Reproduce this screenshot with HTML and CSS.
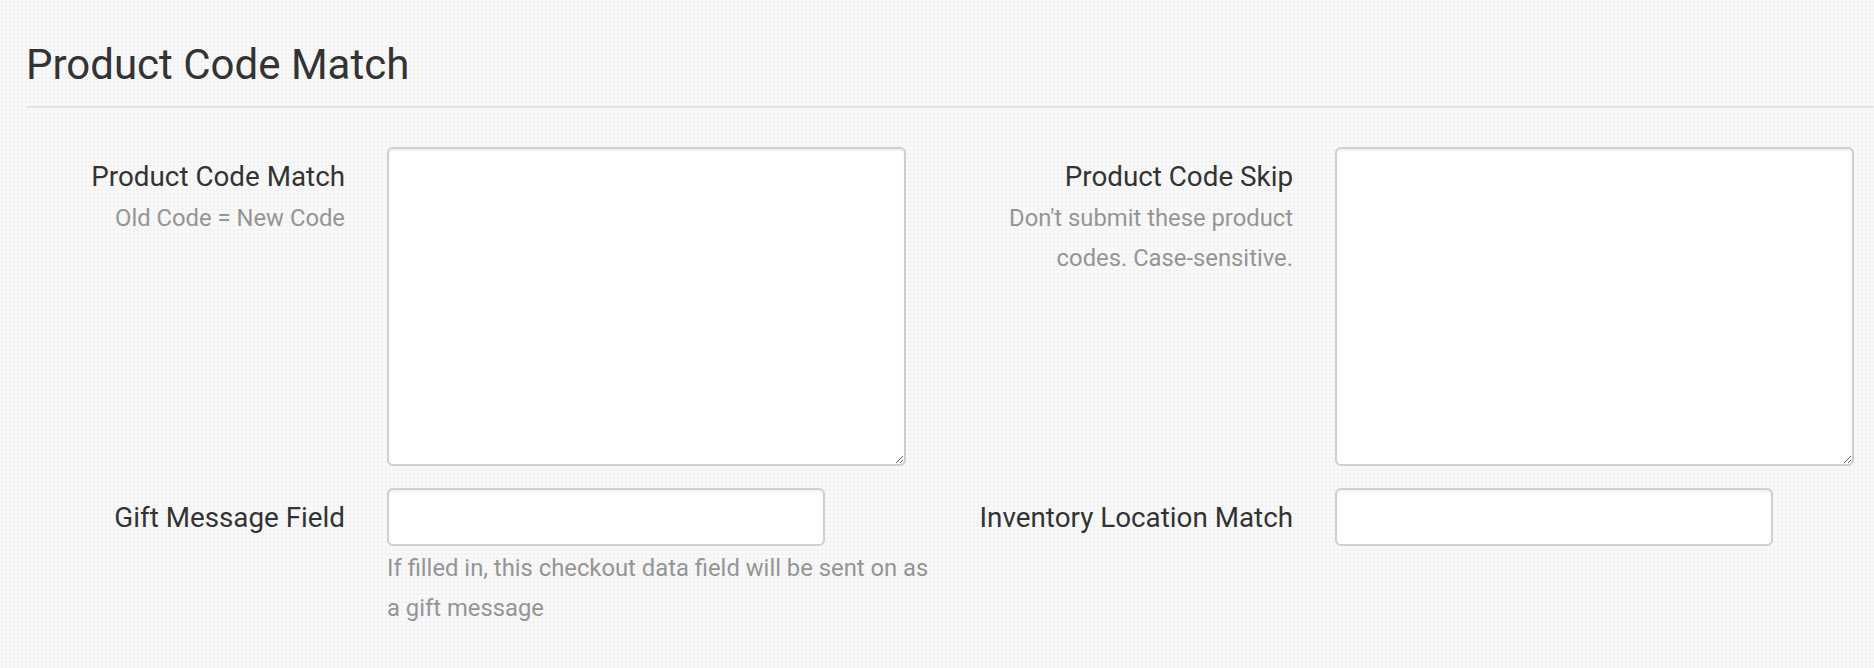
FILE: index.html
```html
<!DOCTYPE html>
<html lang="en">
<head>
<meta charset="utf-8">
<title>Product Code Match</title>
<link rel="stylesheet" href="styles.css">
</head>
<body>
<div class="page">
  <h1 class="section-title">Product Code Match</h1>
  <form class="form-grid">
    <div class="label-cell">
      <label class="control-label" for="pcm">Product Code Match</label>
      <p class="help help-right">Old Code = New Code</p>
    </div>
    <div class="control-cell">
      <textarea id="pcm" class="form-control textarea"></textarea>
    </div>
    <div class="label-cell">
      <label class="control-label" for="pcs">Product Code Skip</label>
      <p class="help help-right">Don't submit these product codes. Case-sensitive.</p>
    </div>
    <div class="control-cell">
      <textarea id="pcs" class="form-control textarea"></textarea>
    </div>

    <div class="label-cell">
      <label class="control-label" for="gmf">Gift Message Field</label>
    </div>
    <div class="control-cell">
      <input id="gmf" type="text" class="form-control input">
      <p class="help help-below">If filled in, this checkout data field will be sent on as a gift message</p>
    </div>
    <div class="label-cell">
      <label class="control-label" for="ilm">Inventory Location Match</label>
    </div>
    <div class="control-cell">
      <input id="ilm" type="text" class="form-control input">
    </div>
  </form>
</div>
</body>
</html>
```

FILE: styles.css
```css
html, body {
  margin: 0;
  padding: 0;
}

body {
  background-color: #f8f8f8;
  background-image: radial-gradient(circle, #f1f1f1 0.8px, transparent 1px);
  background-size: 4px 4px;
  font-family: Roboto, "Liberation Sans", Arial, sans-serif;
  color: #333333;
  width: 1874px;
  height: 668px;
  overflow: hidden;
}

.page {
  padding: 42px 0 0 26px;
}

.section-title {
  margin: 0;
  font-size: 42px;
  line-height: 46px;
  font-weight: 400;
  color: #333333;
  padding-bottom: 18px;
  border-bottom: 2px solid #e4e4e4;
}

.form-grid {
  display: grid;
  grid-template-columns: 319px 519px 345px 519px;
  column-gap: 42px;
  row-gap: 22px;
  margin-top: 39px;
}

.label-cell {
  text-align: right;
}

.control-label {
  display: block;
  padding-top: 12px;
  font-size: 27.8px;
  line-height: 36px;
  font-weight: 400;
  color: #333333;
}

.help {
  margin: 0;
  font-size: 23.8px;
  line-height: 40px;
  color: #959595;
}

.help-right {
  margin-top: 3px;
}

.help-below {
  width: 552px;
  margin-top: 2px;
}

.form-control {
  display: block;
  box-sizing: border-box;
  background: #ffffff;
  border: 2px solid #cfcfcf;
  border-radius: 6px;
  box-shadow: inset 0 2px 2px rgba(0, 0, 0, 0.06);
  font-family: Roboto, "Liberation Sans", Arial, sans-serif;
  font-size: 23px;
  color: #555555;
  margin: 0;
  outline: none;
}

.textarea {
  width: 519px;
  height: 319px;
  resize: vertical;
}

.input {
  width: 438px;
  height: 58px;
  padding: 0 12px;
}
```
